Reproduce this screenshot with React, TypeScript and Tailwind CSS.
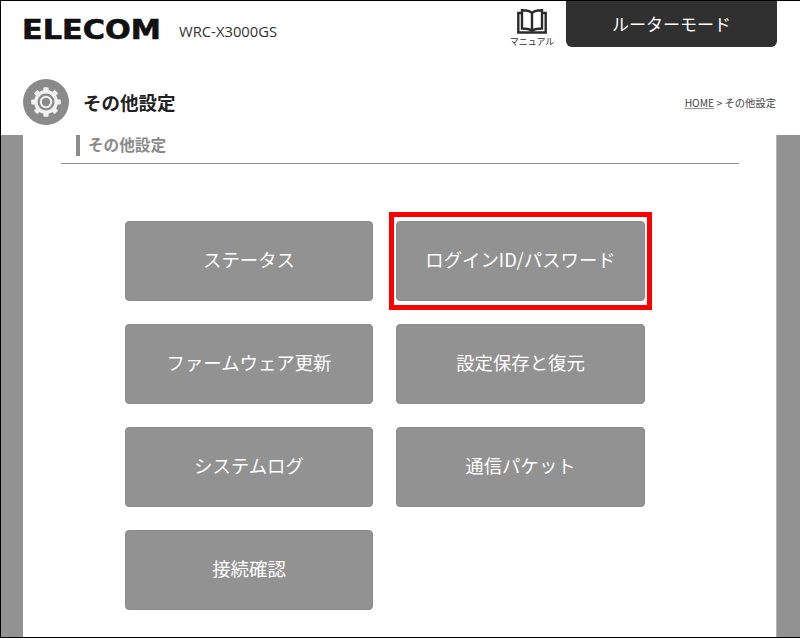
import React from 'react';

const FONT = "font-['Noto_Sans_CJK_JP','Noto_Sans',sans-serif]";

const GearIcon = () => (
    <svg width="32" height="32" viewBox="0 0 32 32" fill="none">
        <circle cx="16" cy="16" r="10.2" stroke="#f2f2f2" strokeWidth="3.4" />
        <circle cx="16" cy="16" r="5.2" stroke="#f2f2f2" strokeWidth="2" />
        {[0, 45, 90, 135, 180, 225, 270, 315].map((a) => (
            <rect key={a} x="13.4" y="1.2" width="5.2" height="5.5" rx="1" fill="#f2f2f2" transform={`rotate(${a} 16 16)`} />
        ))}
    </svg>
);

const BookIcon = () => (
    <svg width="30" height="25" viewBox="0 0 30 25" fill="none" stroke="#2b2b2b" strokeWidth="2.4">
        <path d="M15 4C13 2 10 1.3 5 1.3V19.5C10 19.5 13 20 15 22C17 20 20 19.5 25 19.5V1.3C20 1.3 17 2 15 4Z" />
        <path d="M15 4V22" />
        <path d="M5 4H1.3V23.5H28.7V4H25" />
    </svg>
);

const MenuButton = ({ label, marked }: { label: string; marked?: boolean }) => (
    <div className="relative">
        <div className="h-[80px] pb-[3px] rounded-[4px] bg-[#929292] border border-[#8a8a8a] flex items-center justify-center text-white text-[18.4px]">
            {label}
        </div>
        {marked && <div className="absolute -inset-x-[7px] -inset-y-[9px] border-[5px] border-[#ff0000]" />}
    </div>
);

export default function App() {
    return (
        <div className={`w-[800px] h-[638px] bg-white border border-black border-r-0 flex flex-col overflow-hidden text-[#333] ${FONT}`}>
            {/* Header */}
            <div className="h-[134px] shrink-0 flex flex-col">
                <div className="h-[47px] flex">
                    <div className="pl-[21px] pt-[11px] w-[497px] flex items-start">
                        <span className="w-[136px] h-[36px] font-['DejaVu_Sans',sans-serif] font-bold text-[26px] leading-[36px] text-[#111] [-webkit-text-stroke:0.6px_#111] inline-block origin-left scale-x-[1.165] whitespace-nowrap">ELECOM</span>
                        <span className="ml-[21px] mt-[9px] font-['Open_Sans',sans-serif] text-[14.8px] leading-[20px] text-[#333]">WRC-X3000GS</span>
                    </div>
                    <div className="w-[68px] pt-[8px] flex flex-col items-center">
                        <BookIcon />
                        <span className="text-[9px] leading-[12px] mt-[2px] whitespace-nowrap">マニュアル</span>
                    </div>
                    <div className="w-[211px] h-[46px] rounded-b-[6px] bg-[#303030] text-white text-[17px] flex items-center justify-center">
                        ルーターモード
                    </div>
                </div>
                <div className="flex items-center pl-[22px] pr-[24px] pt-[31px]">
                    <div className="w-[46px] h-[46px] rounded-full bg-[#8a8a8a] flex items-center justify-center">
                        <GearIcon />
                    </div>
                    <h1 className="ml-[14px] mt-[1px] text-[18.5px] font-bold text-[#222]">その他設定</h1>
                    <div className="ml-auto mt-[2px] text-[10.3px] text-[#444]">
                        <span className="underline decoration-[#999]">HOME</span> &gt; その他設定
                    </div>
                </div>
            </div>

            {/* Content */}
            <div className="flex-1 flex">
                <div className="w-[22px] bg-[#929292]" />
                <div className="flex-1 bg-white pl-[38px] pr-[37px]">
                    <div className="h-[29px] border-b border-[#8c8c8c] pl-[15px]">
                        <div className="h-[21px] border-l-[4px] border-[#8c8c8c] pl-[8px] text-[15.6px] leading-[18px] font-bold text-[#8a8a8a]">その他設定</div>
                    </div>
                    <div className="ml-[64px] mt-[57px] grid grid-cols-[248px_249px] gap-x-[23px] gap-y-[23px]">
                        <MenuButton label="ステータス" />
                        <MenuButton label="ログインID/パスワード" marked />
                        <MenuButton label="ファームウェア更新" />
                        <MenuButton label="設定保存と復元" />
                        <MenuButton label="システムログ" />
                        <MenuButton label="通信パケット" />
                        <MenuButton label="接続確認" />
                    </div>
                </div>
                <div className="w-[24px] bg-[#929292] border-l border-[#b4b4b4]" />
            </div>
        </div>
    );
}
